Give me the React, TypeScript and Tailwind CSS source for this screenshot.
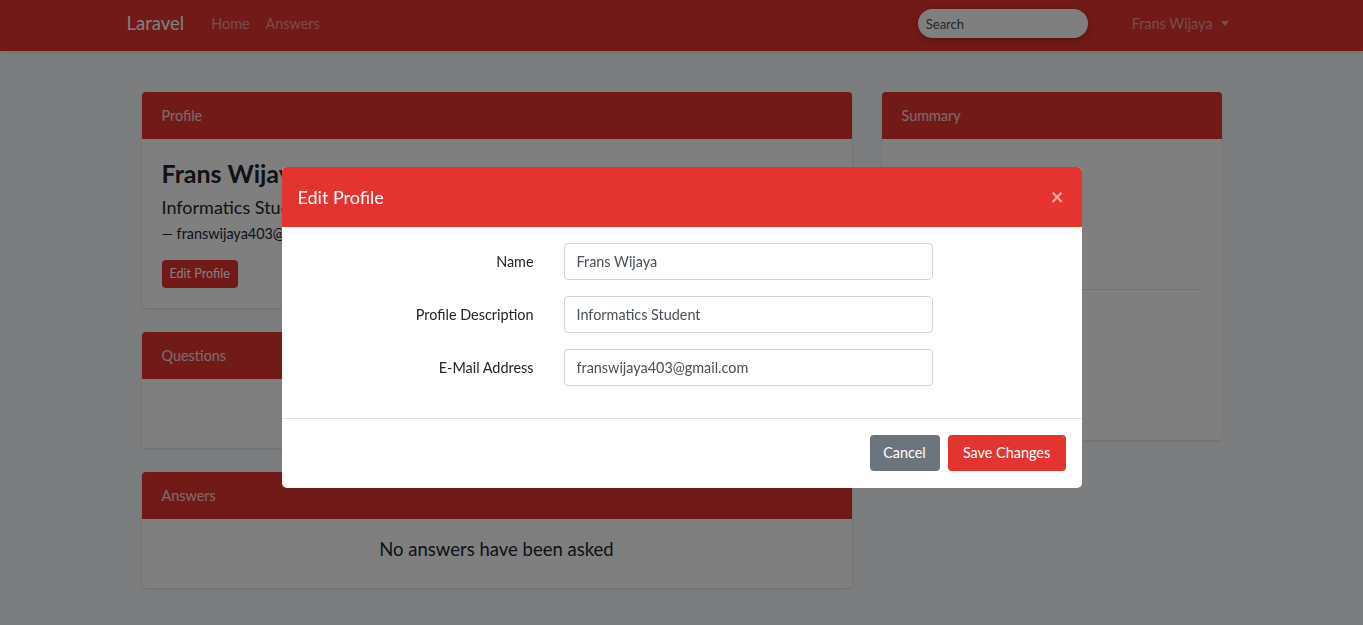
export default function App() {
  return (
    <div className="min-h-screen bg-[#f8fafc] font-['Lato',sans-serif] text-[14.4px] text-[#212529]">
      {/* Navbar */}
      <nav className="h-[51px] bg-[#e3342f] shadow-[0_2px_4px_rgba(0,0,0,0.08)]">
        <div className="w-[1140px] mx-auto px-[15px] h-full pb-[4px] flex items-center">
          <span className="text-[18.5px] text-white mr-[19px]">Laravel</span>
          <span className="px-2 text-white/50">Home</span>
          <span className="px-2 text-white/50">Answers</span>
          <div className="ml-auto flex items-center">
            <input
              readOnly
              placeholder="Search"
              className="w-[170px] h-[29px] rounded-full bg-white px-2 text-[13px] text-[#495057] placeholder:text-[#495057] shadow-[0_2px_6px_rgba(0,0,0,0.25)] outline-none"
            />
            <span className="ml-[44px] mr-[8px] flex items-center gap-2 text-white/50">
              Frans Wijaya
              <span className="w-0 h-0 border-l-[4px] border-r-[4px] border-t-[5px] border-l-transparent border-r-transparent border-t-white/50" />
            </span>
          </div>
        </div>
      </nav>

      {/* Content */}
      <main className="w-[1080px] mx-auto pt-[41px] flex gap-[30px] items-start">
        <div className="w-[710px] flex flex-col gap-6">
          <div className="bg-white rounded shadow-sm overflow-hidden">
            <div className="h-[47px] bg-[#e3342f] px-5 flex items-center text-white/80">Profile</div>
            <div className="p-5">
              <h3 className="text-[25px] font-bold leading-[29px] mb-2">Frans Wijaya</h3>
              <p className="text-[18px] leading-[22px] mb-1">Informatics Student</p>
              <p className="leading-[23px] text-[#212529]">— franswijaya403@gmail.com</p>
              <button className="mt-[15px] h-[28px] px-2 rounded bg-[#e3342f] text-white text-[12.6px]">
                Edit Profile
              </button>
            </div>
          </div>

          <div className="bg-white rounded shadow-sm overflow-hidden">
            <div className="h-[47px] bg-[#e3342f] px-5 flex items-center text-white/80">Questions</div>
            <div className="pt-4 pb-6 text-center text-[18.5px] leading-[29px]">No questions have been asked</div>
          </div>

          <div className="bg-white rounded shadow-sm overflow-hidden">
            <div className="h-[47px] bg-[#e3342f] px-5 flex items-center text-white/80">Answers</div>
            <div className="pt-4 pb-6 text-center text-[18.5px] leading-[29px]">No answers have been asked</div>
          </div>
        </div>

        <div className="w-[340px] bg-white rounded shadow-sm overflow-hidden">
          <div className="h-[47px] bg-[#e3342f] px-5 flex items-center text-white/80">Summary</div>
          <div className="p-5">
            <div className="h-[130px]" />
            <hr className="border-t border-black/10" />
            <div className="h-[130px]" />
          </div>
        </div>
      </main>

      {/* Backdrop */}
      <div className="fixed inset-0 bg-black/50" />

      {/* Modal */}
      <div className="fixed inset-0 flex justify-center pt-[167px]">
        <div className="w-[800px] h-fit bg-white rounded-[5px] overflow-hidden">
          <div className="h-[60px] bg-[#e3342f] px-4 flex items-center justify-between">
            <h5 className="text-[18px] text-white">Edit Profile</h5>
            <span className="text-[22px] font-bold text-white/60 leading-none mr-[2px]">×</span>
          </div>
          <div className="pt-4 pb-8 px-4 flex flex-col gap-4">
            {[
              ["Name", "Frans Wijaya"],
              ["Profile Description", "Informatics Student"],
              ["E-Mail Address", "franswijaya403@gmail.com"],
            ].map(([label, value]) => (
              <div key={label} className="flex items-center">
                <label className="w-[236px] shrink-0 text-right text-[#212529]">{label}</label>
                <input
                  readOnly
                  value={value}
                  className="ml-[30px] w-[369px] h-[37px] border border-[#ced4da] rounded px-3 text-[#495057] outline-none"
                />
              </div>
            ))}
          </div>
          <div className="border-t border-[#dee2e6] px-4 pt-4 pb-[17px] flex justify-end gap-2">
            <button className="h-[36px] w-[70px] rounded bg-[#6c757d] text-white">Cancel</button>
            <button className="h-[36px] w-[118px] rounded bg-[#e3342f] text-white">Save Changes</button>
          </div>
        </div>
      </div>
    </div>
  );
}
